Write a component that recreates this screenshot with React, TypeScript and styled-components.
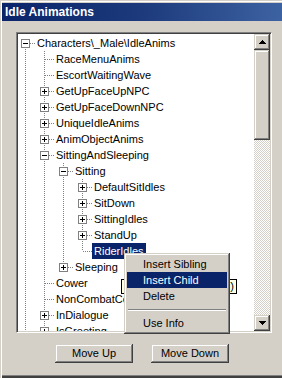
import React from 'react';
import styled, { createGlobalStyle } from 'styled-components';

const GlobalStyle = createGlobalStyle`
  html, body { margin: 0; padding: 0; background: #d4d0c8; overflow: hidden; }
  #root { width: 282px; height: 378px; }
`;

const UI_FONT = `"Liberation Sans", Arial, sans-serif`;

const Window = styled.div`
  position: relative;
  box-sizing: border-box;
  width: 282px;
  height: 378px;
  padding: 3px 0 0 2px;
  background: #d4d0c8;
  display: flex;
  flex-direction: column;
  font-family: ${UI_FONT};
  font-size: 11px;
  color: #000;
  overflow: hidden;
  box-shadow: inset 1px 1px #d4d0c8, inset 2px 2px #ffffff, inset 0 -2px #404040, inset 0 -3px #808080;
`;

const TitleBar = styled.div`
  flex: none;
  height: 18px;
  padding-left: 3px;
  background: linear-gradient(to right, #0a246a 0%, #1c3a7c 50%, #3d62a2 100%);
  color: #ffffff;
  font-weight: bold;
  font-size: 12px;
  line-height: 18px;
  white-space: nowrap;
`;

const TreeFrame = styled.div`
  box-sizing: border-box;
  flex: none;
  width: 256px;
  height: 301px;
  margin: 11px 0 0 14px;
  padding: 1px;
  display: flex;
  border-style: solid;
  border-width: 1px;
  border-color: #808080 #ffffff #ffffff #808080;
  box-shadow: inset 1px 1px #404040, inset -1px -1px #d4d0c8;
  background: #ffffff;
`;

const TreeList = styled.div`
  flex: 1;
  min-width: 0;
  padding-top: 1px;
  background: #ffffff;
  overflow: hidden;
`;

const Row = styled.div`
  display: flex;
  height: 16px;
  white-space: nowrap;
`;

const Label = styled.span<{ $selected?: boolean }>`
  flex: none;
  height: 16px;
  padding: 0 2px;
  line-height: 16px;
  background: ${(p) => (p.$selected ? '#0a246a' : 'transparent')};
  color: ${(p) => (p.$selected ? '#ffffff' : '#000000')};
`;

const GuideSvg = styled.svg`
  flex: none;
  display: block;
  shape-rendering: crispEdges;
`;

const ScrollBar = styled.div`
  flex: none;
  width: 16px;
  display: flex;
  flex-direction: column;
`;

const raised = `
  background: #d4d0c8;
  box-shadow: inset -1px -1px #404040, inset 1px 1px #d4d0c8, inset -2px -2px #808080, inset 2px 2px #ffffff;
`;

const ScrollButton = styled.div`
  flex: none;
  height: 16px;
  display: flex;
  align-items: center;
  justify-content: center;
  ${raised}
`;

const Thumb = styled.div<{ $size: number }>`
  flex: none;
  height: ${(p) => p.$size}px;
  ${raised}
`;

const Track = styled.div`
  flex: 1;
  background-color: #d4d0c8;
  background-image: conic-gradient(#ffffff 25%, transparent 0 50%, #ffffff 0 75%, transparent 0);
  background-size: 2px 2px;
`;

const ButtonRow = styled.div`
  flex: none;
  display: flex;
  justify-content: center;
  gap: 18px;
  margin-top: 11px;
`;

const PushButton = styled.button`
  box-sizing: border-box;
  width: 78px;
  height: 19px;
  padding: 0;
  border: none;
  font-family: ${UI_FONT};
  font-size: 11px;
  line-height: 19px;
  color: #000;
  ${raised}
`;

const Tooltip = styled.div`
  position: absolute;
  left: 121px;
  top: 279px;
  box-sizing: border-box;
  width: 116px;
  height: 15px;
  padding-right: 2px;
  border: 1px solid #000;
  background: #ffffe1;
  line-height: 13px;
  text-align: right;
  white-space: nowrap;
  overflow: hidden;
`;

const Menu = styled.div`
  position: absolute;
  left: 124px;
  top: 253px;
  box-sizing: border-box;
  width: 106px;
  padding: 3px;
  ${raised}
`;

const MenuItem = styled.div<{ $active?: boolean }>`
  height: 16px;
  padding-left: 16px;
  line-height: 16px;
  white-space: nowrap;
  background: ${(p) => (p.$active ? '#0a246a' : 'transparent')};
  color: ${(p) => (p.$active ? '#ffffff' : '#000000')};
`;

const MenuSeparator = styled.div`
  height: 2px;
  margin: 5px 1px 4px;
  background: #808080;
  box-shadow: 0 1px 0 #ffffff;
  height: 1px;
  margin-bottom: 5px;
`;

type TreeNode = {
  label: string;
  level: number;
  box?: '+' | '-';
  selected?: boolean;
};

const nodes: TreeNode[] = [
  { label: 'Characters\\_Male\\IdleAnims', level: 0, box: '-' },
  { label: 'RaceMenuAnims', level: 1 },
  { label: 'EscortWaitingWave', level: 1 },
  { label: 'GetUpFaceUpNPC', level: 1, box: '+' },
  { label: 'GetUpFaceDownNPC', level: 1, box: '+' },
  { label: 'UniqueIdleAnims', level: 1, box: '+' },
  { label: 'AnimObjectAnims', level: 1, box: '+' },
  { label: 'SittingAndSleeping', level: 1, box: '-' },
  { label: 'Sitting', level: 2, box: '-' },
  { label: 'DefaultSitIdles', level: 3, box: '+' },
  { label: 'SitDown', level: 3, box: '+' },
  { label: 'SittingIdles', level: 3, box: '+' },
  { label: 'StandUp', level: 3, box: '+' },
  { label: 'RiderIdles', level: 3, selected: true },
  { label: 'Sleeping', level: 2, box: '+' },
  { label: 'Cower', level: 1 },
  { label: 'NonCombatConversation', level: 1 },
  { label: 'InDialogue', level: 1, box: '+' },
  { label: 'IsGreeting', level: 1, box: '+' },
];

// does a sibling at `level` follow row r (list continues past the view)?
function continues(r: number, level: number): boolean {
  for (let i = r + 1; i < nodes.length; i++) {
    if (nodes[i].level === level) return true;
    if (nodes[i].level < level) return false;
  }
  return true;
}

const colWidth = (c: number) => (c === 0 ? 17 : 19);
const colCenter = (c: number) => (c === 0 ? 7 : 9);

const LINE = '#808080';

function Guide({
  col,
  up,
  down,
  horiz,
  box,
}: {
  col: number;
  up?: boolean;
  down?: boolean;
  horiz?: boolean;
  box?: '+' | '-';
}) {
  const w = colWidth(col);
  const c = colCenter(col);
  const x = c + 0.5;
  return (
    <GuideSvg width={w} height={16} viewBox={`0 0 ${w} 16`}>
      {up && <line x1={x} y1={0} x2={x} y2={8} stroke={LINE} strokeDasharray="1 1" />}
      {down && <line x1={x} y1={8} x2={x} y2={16} stroke={LINE} strokeDasharray="1 1" />}
      {horiz && <line x1={c + 1} y1={8.5} x2={w} y2={8.5} stroke={LINE} strokeDasharray="1 1" />}
      {box && (
        <g>
          <rect x={c - 3.5} y={4.5} width={8} height={8} fill="#ffffff" stroke="#808080" />
          <line x1={c - 2} y1={8.5} x2={c + 3} y2={8.5} stroke="#000" />
          {box === '+' && <line x1={x} y1={6} x2={x} y2={11} stroke="#000" />}
        </g>
      )}
    </GuideSvg>
  );
}

function TreeRow({ node, index }: { node: TreeNode; index: number }) {
  const cols = [];
  for (let c = 0; c < node.level; c++) {
    cols.push(<Guide key={c} col={c} up={continues(index, c)} down={continues(index, c)} />);
  }
  const isFirst = index === 0;
  const isLast = !continues(index, node.level);
  cols.push(
    <Guide key="own" col={node.level} up={!isFirst} down={!isLast} horiz box={node.box} />
  );
  return (
    <Row>
      {cols}
      <Label $selected={node.selected}>{node.label}</Label>
    </Row>
  );
}

function Arrow({ dir }: { dir: 'up' | 'down' }) {
  return (
    <svg width="7" height="4" viewBox="0 0 7 4" shapeRendering="crispEdges">
      {dir === 'up' ? (
        <polygon points="3.5,0 7,4 0,4" fill="#000" />
      ) : (
        <polygon points="0,0 7,0 3.5,4" fill="#000" />
      )}
    </svg>
  );
}

export default function App() {
  return (
    <>
      <GlobalStyle />
      <Window>
        <TitleBar>Idle Animations</TitleBar>
        <TreeFrame>
          <TreeList>
            {nodes.map((n, i) => (
              <TreeRow key={i} node={n} index={i} />
            ))}
          </TreeList>
          <ScrollBar>
            <ScrollButton>
              <Arrow dir="up" />
            </ScrollButton>
            <Thumb $size={90} />
            <Track />
            <ScrollButton>
              <Arrow dir="down" />
            </ScrollButton>
          </ScrollBar>
        </TreeFrame>
        <ButtonRow>
          <PushButton>Move Up</PushButton>
          <PushButton>Move Down</PushButton>
        </ButtonRow>
        <Tooltip>RiderIdles (Sitting)</Tooltip>
        <Menu>
          <MenuItem>Insert Sibling</MenuItem>
          <MenuItem $active>Insert Child</MenuItem>
          <MenuItem>Delete</MenuItem>
          <MenuSeparator />
          <MenuItem>Use Info</MenuItem>
        </Menu>
      </Window>
    </>
  );
}
